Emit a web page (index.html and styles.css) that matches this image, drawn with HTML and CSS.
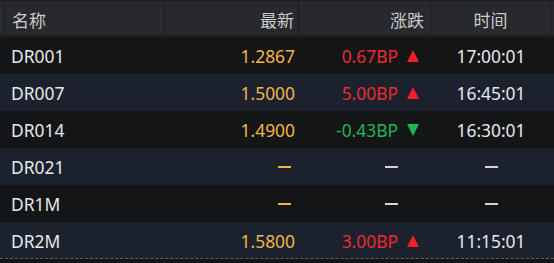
FILE: index.html
```html
<!DOCTYPE html>
<html lang="zh">
<head>
<meta charset="utf-8">
<link rel="stylesheet" href="styles.css">
</head>
<body>
<div class="table">
  <div class="head">
    <div class="hcell pad"></div>
    <div class="hcell c-name">名称</div>
    <div class="hcell c-price">最新</div>
    <div class="hcell c-chg">涨跌</div>
    <div class="hcell c-time">时间</div>
  </div>
  <div class="row dark">
    <div class="cell pad"></div>
    <div class="cell c-name">DR001</div>
    <div class="cell c-price price">1.2867</div>
    <div class="cell c-chg up">0.67BP<span class="tri up-tri"></span></div>
    <div class="cell c-time">17:00:01</div>
  </div>
  <div class="row navy">
    <div class="cell pad"></div>
    <div class="cell c-name">DR007</div>
    <div class="cell c-price price">1.5000</div>
    <div class="cell c-chg up">5.00BP<span class="tri up-tri"></span></div>
    <div class="cell c-time">16:45:01</div>
  </div>
  <div class="row dark">
    <div class="cell pad"></div>
    <div class="cell c-name">DR014</div>
    <div class="cell c-price price">1.4900</div>
    <div class="cell c-chg down">-0.43BP<span class="tri down-tri"></span></div>
    <div class="cell c-time">16:30:01</div>
  </div>
  <div class="row navy">
    <div class="cell pad"></div>
    <div class="cell c-name">DR021</div>
    <div class="cell c-price"><span class="dash orange"></span></div>
    <div class="cell c-chg"><span class="dash grey"></span><span class="tri none"></span></div>
    <div class="cell c-time"><span class="dash grey"></span></div>
  </div>
  <div class="row dark">
    <div class="cell pad"></div>
    <div class="cell c-name">DR1M</div>
    <div class="cell c-price"><span class="dash orange"></span></div>
    <div class="cell c-chg"><span class="dash grey"></span><span class="tri none"></span></div>
    <div class="cell c-time"><span class="dash grey"></span></div>
  </div>
  <div class="row navy last">
    <div class="cell pad"></div>
    <div class="cell c-name">DR2M</div>
    <div class="cell c-price price">1.5800</div>
    <div class="cell c-chg up">3.00BP<span class="tri up-tri"></span></div>
    <div class="cell c-time">11:15:01</div>
  </div>
</div>
</body>
</html>
```
FILE: styles.css
```css
html, body {
  margin: 0;
  padding: 0;
  background: #151618;
}
body {
  width: 554px;
  height: 263px;
  overflow: hidden;
  font-family: "Noto Sans", "Noto Sans CJK SC", sans-serif;
  font-size: 17.4px;
  color: #e6e8ea;
}
.table {
  display: flex;
  flex-direction: column;
}
.head, .row {
  display: grid;
  grid-template-columns: 5px 160px 134px 132px 120px 3px;
}
.head {
  height: 34px;
  background: #27292c;
  border-top: 1px solid #1c1d1f;
  border-bottom: 2px solid #1c1d1f;
  box-shadow: 0 1px 0 #0f1011;
}
.hcell {
  display: flex;
  align-items: center;
  padding-top: 2px;
  color: #c9cbcd;
  border-right: 1px solid #1a1b1d;
  font-family: "Noto Sans CJK SC", sans-serif;
  font-size: 17px;
}
.row {
  height: 37px;
}
.row.dark { background: #141517; }
.row.navy { background: #1c222d; }
.row.last {
  height: 36px;
  border-bottom: 1px dashed #5a5f66;
}
.cell {
  display: flex;
  align-items: center;
  padding-top: 1px;
}
.c-name { padding-left: 6px; }
.hcell.c-name { padding-left: 7px; }
.c-price { justify-content: flex-end; padding-right: 4px; }
.c-chg { justify-content: flex-end; padding-right: 4px; }
.c-time { justify-content: center; }
.hcell.c-price { padding-right: 4px; }
.hcell.c-chg { padding-right: 6px; }
.price { color: #f3b447; }
.up { color: #ee2a31; }
.down { color: #21b656; }
.tri {
  display: inline-block;
  width: 0;
  height: 0;
  margin-left: 9px;
  margin-right: 8px;
  border-left: 6px solid transparent;
  border-right: 6px solid transparent;
}
.up-tri { border-bottom: 12px solid #ee1f27; }
.down-tri { border-top: 12px solid #1fb853; }
.tri.none { border-color: transparent; border-bottom: 12px solid transparent; }
.dash {
  display: inline-block;
  width: 13px;
  height: 2px;
}
.dash.orange { background: #f3b447; margin-right: 4px; }
.dash.grey { background: #d2d4d6; }
```
